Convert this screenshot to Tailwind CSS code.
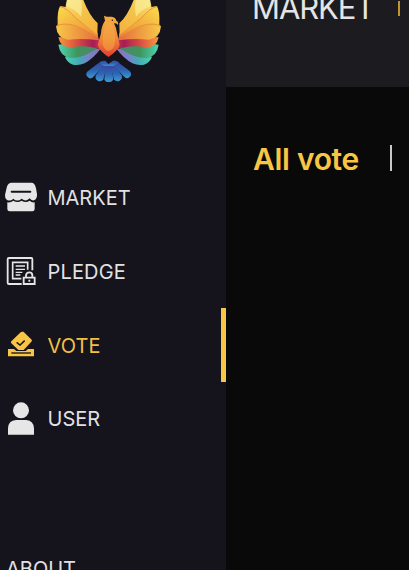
<!DOCTYPE html>
<html lang="en">
<head>
<meta charset="utf-8">
<title>Vote</title>
<script src="https://cdn.jsdelivr.net/npm/@tailwindcss/browser@4"></script>
</head>
<body class="h-[570px] w-[409px] overflow-hidden bg-[#090909] font-['Inter',sans-serif]">
<div class="flex h-[570px] w-[409px] overflow-hidden">
  <aside class="flex h-full w-[226px] shrink-0 flex-col overflow-hidden bg-[#15131c] text-[20px] text-[#e2e1e3]">
    <div class="h-[161px] shrink-0 pl-[45px]">
      <svg class="h-[90px] w-[125px]" viewBox="0 0 375 270">
        <defs>
          <linearGradient id="w1" x1="0" y1="0" x2=".8" y2="1"><stop stop-color="#f8e47c"/><stop offset=".5" stop-color="#f5c34a"/><stop offset="1" stop-color="#f4b33f"/></linearGradient>
          <linearGradient id="w2" x1="0" y1="0" x2="1" y2="1"><stop stop-color="#fbdc4b"/><stop offset="1" stop-color="#ec8737"/></linearGradient>
          <linearGradient id="w3" x1="0" y1="0" x2="1" y2="0"><stop stop-color="#f8c947"/><stop offset="1" stop-color="#e46b3d"/></linearGradient>
          <linearGradient id="w4" x1="0" y1="0" x2="1" y2="0"><stop stop-color="#f59a3e"/><stop offset=".45" stop-color="#d94943"/><stop offset=".8" stop-color="#a51d56"/><stop offset="1" stop-color="#cd3550"/></linearGradient>
          <linearGradient id="w5" x1="0" y1="0" x2="1" y2="0"><stop stop-color="#4dd6b0"/><stop offset=".45" stop-color="#3f955e"/><stop offset="1" stop-color="#51836c"/></linearGradient>
          <linearGradient id="w6" x1="0" y1="0" x2="1" y2="0"><stop stop-color="#49d3ae"/><stop offset=".4" stop-color="#45a8b7"/><stop offset=".65" stop-color="#7a83cb"/><stop offset="1" stop-color="#8b72b1"/></linearGradient>
          <linearGradient id="bd" x1="0" y1="0" x2="0" y2="1"><stop stop-color="#f4ad3f"/><stop offset=".55" stop-color="#ee8939"/><stop offset="1" stop-color="#e6392f"/></linearGradient>
          <linearGradient id="tl" x1="0" y1="0" x2="0" y2="1"><stop stop-color="#3948a2"/><stop offset=".5" stop-color="#2c65b3"/><stop offset="1" stop-color="#3c99d2"/></linearGradient>
          <g id="wing">
            <path fill="url(#w6)" d="M60 171Q108 152 168 145Q145 176 119 190Q101 198 84 194Q67 188 60 171Z"/>
            <path fill="url(#w5)" d="M40 134Q92 122 165 139Q150 153 129 161Q103 174 76 174Q45 169 40 134Z"/>
            <path fill="url(#w4)" d="M40 112Q97 109 162 115L170 150Q121 132 77 143Q46 142 40 112Z"/>
            <path fill="url(#w3)" d="M33 79Q45 62 92 68L158 100L161 121Q112 114 69 119Q36 115 33 79Z"/>
            <path fill="url(#w2)" d="M45 19Q64 16 92 44L157 98L157 112Q115 82 78 76Q52 69 38 74Q36 34 45 19Z"/>
            <path fill="url(#w1)" d="M68-8L112-8Q131 45 158 70L157 105Q121 83 89 51Q72 34 61 26Q63 6 68-8Z"/>
            <path fill="#faf0a0" opacity=".65" d="M70-8L107-8Q114 22 108 50Q91 27 67 20Q65 6 70-8Z"/>
            <path fill="none" stroke="#e48a36" stroke-width="2.5" d="M46 20Q64 22 92 54L156 105M34 80Q50 66 92 77L157 110"/>
          </g>
        </defs>
        <use href="#wing"/>
        <use href="#wing" transform="translate(381 0) scale(-1 1)"/>
        <path fill="url(#bd)" d="M177 47Q188 52 200 50Q212 52 214 62Q221 64 219 75Q215 68 207 70Q214 82 217 103L224 134Q220 151 190 171Q164 153 158 135L168 100Q169 77 180 62Z"/>
        <path fill="#f4ac46" opacity=".55" d="M181 65Q201 62 205 82Q214 108 208 138Q202 151 189 154Q175 148 173 132Q172 112 176 91Z"/>
        <circle cx="202" cy="61" r="2.3" fill="#31201d"/>
        <g fill="url(#tl)">
          <path d="M181 182L190 192L204 182Q215 180 224 190L211 199L172 199L162 188Q168 181 181 182Z"/>
          <path d="M162 188L176 197L144 232Q134 240 126 229Q120 220 130 212Z"/>
          <path d="M172 197L186 199L175 238Q169 247 158 242Q148 236 153 226Z"/>
          <path d="M183 198H199L205 236Q203 246 191 246Q179 246 178 236Z"/>
          <path d="M196 199L210 197L230 226Q234 237 224 242Q214 247 207 238Z"/>
          <path d="M206 197L221 188L253 212Q262 220 256 229Q248 239 239 232Z"/>
        </g>
      </svg>
    </div>
    <nav class="flex shrink-0 flex-col">
      <a class="flex h-[74px] items-center">
        <svg class="mb-[2px] h-[45px] w-[48px] shrink-0" viewBox="0 0 144 135" fill="#e6e6e6"><path d="M33 23H94Q105 23 108 40L111 58Q112 72 102 76Q94 78 89 70Q78 82 65 71Q51 82 40 71Q31 80 21 75Q14 70 15 60L20 38Q23 24 33 23Z"/><path d="M22 82Q32 84 40 77Q52 85 65 77Q77 85 89 77Q96 84 104 82V102Q104 109 97 109H29Q22 109 22 102Z"/><path d="M35 50H91" stroke="#15131c" stroke-width="6" stroke-linecap="round"/></svg>
        <span class="-ml-[0.5px]">MARKET</span>
      </a>
      <a class="flex h-[73px] items-center pt-[1px]">
        <svg class="h-[45px] w-[48px] shrink-0" viewBox="0 0 144 135" fill="none" stroke="#e6e6e6" stroke-width="5.5"><path d="M97 61V27Q97 24 94 24H27Q23 24 23 28V98Q23 102 27 102H65"/><path d="M83 59V37H38V86H64" stroke-width="5"/><path d="M47 48H75M47 58H75M47 67H67M47 75H61" stroke-width="4"/><path d="M71 83H104V102H71Z"/><path d="M78 81V76Q79 67 88 67Q97 67 97 76V81M88 89V95"/></svg>
        <span class="-ml-[0.5px] tracking-[0.15px]">PLEDGE</span>
      </a>
      <a class="flex h-[74px] items-center border-r-[5px] border-[#f8c545] pt-[1px] text-[#f3c044]">
        <svg class="h-[45px] w-[48px] shrink-0" viewBox="0 0 144 135" fill="#f8c545"><path d="M67 26Q69 25 72 28L95 50Q97 53 94 56L71 81H55L34 61Q31 58 34 55L62 28Z"/><path d="M50 58L60 66L74 53" fill="none" stroke="#15131c" stroke-width="4.5"/><path d="M24 78H42L49 84H77L84 78H102V100H24Z"/><path d="M34 90H93" stroke="#15131c" stroke-width="4"/></svg>
        <span class="-ml-[0.5px] tracking-[0.1px]">VOTE</span>
      </a>
      <a class="flex h-[73px] items-center">
        <svg class="mb-[2px] h-[45px] w-[48px] shrink-0" viewBox="0 0 144 135" fill="#e6e6e6"><circle cx="63" cy="46" r="24"/><path d="M24 119V100Q25 76 48 75H79Q101 77 102 100V119Z"/></svg>
        <span class="-ml-[0.5px] pt-[1px]">USER</span>
      </a>
    </nav>
    <div class="mt-[102px] h-6 shrink-0 pl-[6px] leading-[24px]">ABOUT</div>
  </aside>
  <main class="flex min-w-0 flex-1 flex-col">
    <header class="flex h-[87px] shrink-0 items-start bg-[#1c1b1f]">
      <div class="-mt-[11px] ml-[26px] w-[146px] text-[31px] leading-[38px] tracking-[-1.1px] text-[#e5e5e5]">MARKET</div>
      <div class="mt-[1px] h-[15px] w-[1.5px] bg-[#c1942f]"></div>
    </header>
    <section class="flex pt-[53px] pl-[27px]">
      <h1 class="w-[137px] whitespace-nowrap text-[30px] font-semibold leading-[38px] tracking-[-0.3px] text-[#f8c545]">All vote</h1>
      <div class="mt-[5px] h-[26px] w-[1.5px] bg-[#c9c9c9]"></div>
    </section>
  </main>
</div>
</body>
</html>
